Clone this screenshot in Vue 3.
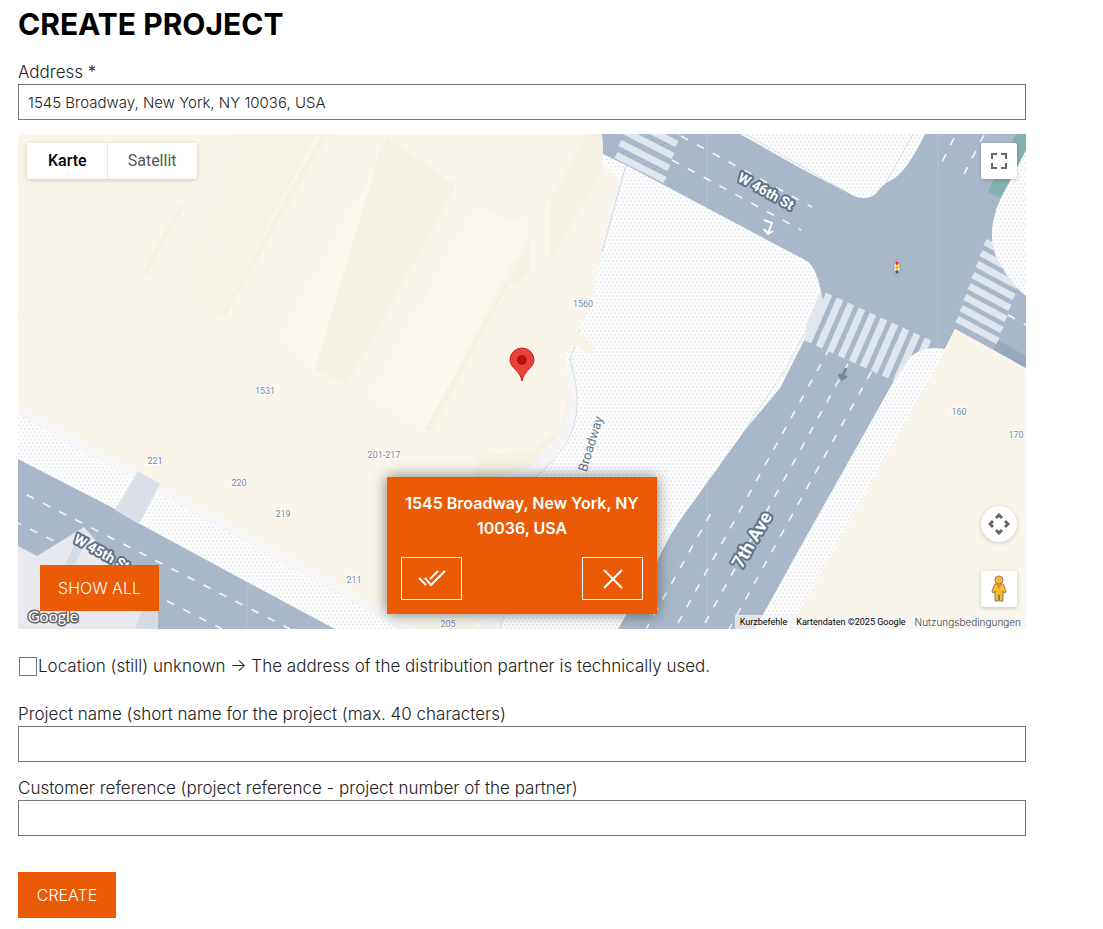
<script setup>
import { ref } from 'vue'

const address = ref('1545 Broadway, New York, NY 10036, USA')
const unknownLocation = ref(false)
const projectName = ref('')
const customerReference = ref('')
const mapType = ref('map')
const infoOpen = ref(true)

const stripes = (count, x1, y1, x2, y2, dx, dy) =>
  Array.from({ length: count }, (_, i) => ({
    x1: x1 + i * dx,
    y1: y1 + i * dy,
    x2: x2 + i * dx,
    y2: y2 + i * dy,
  }))

const crosswalks = [
  ...stripes(5, 616, 155, 665, 180, 4, -12),
  ...stripes(10, 829, 294, 808, 342, 11, 5),
  ...stripes(8, 957, 319, 998, 341, 4, -11),
]

const lanes = [
  'M645 631L711 513',
  'M678 623L828 351',
  'M705 623L850 360',
  'M728 631L874 367',
  'M954 138L940 166',
  'M984 135L964 174',
  'M681 136L812 207',
  'M672 160L801 230',
  'M1008 315L1026 325',
  'M27 495L290 629',
  'M14 521L54 541',
  'M167 601L222 629',
]

const numbers = [
  ['1560', 583, 307],
  ['1531', 265, 394],
  ['221', 155, 464],
  ['220', 239, 486],
  ['219', 283, 517],
  ['201-217', 384, 458],
  ['211', 354, 583],
  ['205', 448, 627],
  ['160', 959, 415],
  ['170', 1016, 438],
]
</script>

<template>
  <main class="page">
    <h1>CREATE PROJECT</h1>
    <form @submit.prevent>
      <div class="field">
        <label for="address">Address *</label>
        <input id="address" v-model="address" type="text" required />
      </div>

      <section class="map" aria-label="Map">
        <svg class="canvas" viewBox="18 134 1008 495" preserveAspectRatio="xMidYMid slice">
          <defs>
            <pattern id="dots" width="8" height="7" patternUnits="userSpaceOnUse">
              <rect width="8" height="7" fill="#fefefe" />
              <path
                d="M0 1h2v2H0zM4 1h2v2H4zM2 4.5h2v2H2zM6 4.5h2v2H6z"
                fill="#eceef1"
              />
            </pattern>
            <linearGradient id="roof" x1="0" x2="1" y1="0" y2="0.4">
              <stop offset="0" stop-color="#fbf7ed" />
              <stop offset="0.8" stop-color="#f5f1e5" />
            </linearGradient>
          </defs>
          <rect x="18" y="134" width="1008" height="495" fill="url(#dots)" />

          <!-- pavement edges -->
          <path d="M626 165L602 252M745 134L850 194M913 134L885 184M823 300L784 372L748 425" class="edge" />

          <!-- streets -->
          <path
            class="road"
            d="M602 134H740L800 168L850 194Q864 202 876 194Q882 184 892 180Q908 170 925 134H1026V150L1001 198Q982 240 1003 268Q1011 284 1026 296V368L955 329L945 349Q920 345 908 360L893 383L800 548L755 629H618L657 562Q664 545 678 523L745 430L780 388L789 370L823 304Q818 266 805 260L626 165L603 154Z"
          />
          <path class="road" d="M18 459L115 509L140 524L290 605L335 629H165L18 629Z" />
          <path d="M1016 134H1026V150L1001 198L988 192Z" fill="#82b1ae" />
          <path d="M998 340L1026 356V368L994 350Z" fill="#98a9bb" />
          <path d="M823 304L820 292L806 326L805 343Z" fill="#dfe6ee" />

          <line v-for="(s, i) in crosswalks" :key="i" v-bind="s" class="stripe" />
          <path d="M1030 144L1001 198Q982 240 1003 268Q1011 284 1030 299Z" fill="url(#dots)" />
          <path d="M955 329L945 349Q920 345 908 360L893 383L800 548L755 629H800L930 395Z" fill="url(#dots)" />
          <path v-for="d in lanes" :key="d" :d="d" class="lane" />

          <!-- right block -->
          <path d="M955 329L1026 369V629H789L932 376Z" fill="#f9f5ea" />

          <!-- south-west block -->
          <path d="M18 546L37 556L84 527L158 612V629H18Z" fill="#e8e9ef" />
          <path d="M82 529L58 580L67 580L84 545ZM149 590L135 629H158V612Z" fill="#d6dae4" />
          <path d="M18 404L440 629H400L18 415Z" fill="#f6f6f7" />
          <path d="M138 471L161 482L139 524L115 510Z" fill="#dbdfe8" />

          <!-- main block -->
          <path d="M603 166L620 180L604 245L592 300L576 340L570 352Q590 420 560 450Q546 470 530 482L500 629H480L490 480L560 420Z" fill="#f5f5f7" />
          <path d="M626 165L602 252M580 330L570 360Q586 410 566 444Q555 461 535 478M508 600L500 629" class="edge" />
          <path
            d="M18 134H602L603 166L610 169L620 180L610 201L593 290L578 333L596 346L590 355L572 344L566 354L568 410L560 432L531 467L495 478L478 629H420L18 404Z"
            fill="#f9f5ea"
          />
          <path d="M238 134H316L220 315L141 272L180 205Q225 160 238 134Z" fill="url(#roof)" />
          <path d="M180 205L140 274L147 275L184 207ZM322 134L221 313L225 317L329 134Z" fill="#f4f0e4" />
          <path d="M387 137L456 186L347 385L315 369L380 152Z" fill="#f4f0e4" />
          <path d="M380 152L363 190L277 342L294 350L315 369Z" fill="#fbf7ed" />
          <path d="M476 205L530 224L425 431L369 398Z" fill="#fbf7ec" />
          <path d="M530 238V268L518 286L510 282L432 431L425 429L500 292Z" fill="#f4f0e4" />
          <path d="M587 134L551 199V260L603 170L602 134ZM571 384L561 428L531 450L474 457L480 462L473 478L495 478L531 467L560 432L568 410Z" fill="#f4f0e4" />
          <path d="M456 186L506 219L545 202M18 208L70 238M18 319L130 380M255 410L345 463" class="roofline" />
          <path d="M247 134V629M477 134V480M707 134V629M938 134V615" class="tile" />

          <!-- signs on the roadway -->
          <path d="M764 220L772 223L768 233M764 229L768 234L773 231" class="turn" />
          <path d="M846 368L842 377M839 374L842 379L847 376" class="small-arrow" />
          <rect x="894" y="260" width="6" height="15" rx="2" fill="#fff" stroke="#8997a8" />
          <circle cx="897" cy="263" r="2" fill="#ea4335" />
          <circle cx="897" cy="267.500" r="2" fill="#fbbc04" />
          <circle cx="897" cy="272" r="2" fill="#526580" />

          <text v-for="[label, x, y] in numbers" :key="label" :x="x" :y="y" class="number">{{ label }}</text>
          <text x="766" y="196" transform="rotate(29 766 191)" class="street">W 46th St</text>
          <text x="102" y="557" transform="rotate(29 101 552)" class="street">W 45th St</text>
          <text x="752" y="546" transform="rotate(-60 752 540)" class="street avenue">7th Ave</text>
          <text x="591" y="448" transform="rotate(-73 591 444)" class="broadway">Broadway</text>

          <!-- location pin -->
          <path
            d="M522 381C520 370 510 368 510 360A12 12 0 0 1 534 360C534 368 524 370 522 381Z"
            fill="#ea4335"
            stroke="#c5221f"
          />
          <circle cx="522" cy="360" r="5" fill="#b31412" />
        </svg>

        <div class="map-types">
          <button type="button" :class="{ active: mapType === 'map' }" @click="mapType = 'map'">Karte</button>
          <button type="button" :class="{ active: mapType === 'satellite' }" @click="mapType = 'satellite'">Satellit</button>
        </div>
        <button type="button" class="control fullscreen" aria-label="Fullscreen">
          <svg width="18" height="18" viewBox="0 0 18 18"><path d="M2 7V2H7M11 2H16V7M16 11V16H11M7 16H2V11" /></svg>
        </button>
        <button type="button" class="control camera" aria-label="Camera controls">
          <svg width="22" height="22" viewBox="0 0 22 22"><path d="M8 5L11 2L14 5M17 8L20 11L17 14M14 17L11 20L8 17M5 14L2 11L5 8" /></svg>
        </button>
        <button type="button" class="control pegman" aria-label="Street View">
          <svg width="18" height="28" viewBox="0 0 18 28">
            <path d="M5 9L13 9Q15 12 16 17L14 18L13 16V26H9.500V20H8.500V26H5V16L4 18L2 17Q3 12 5 9Z" fill="#fbbc2a" stroke="#8c7b64" />
            <circle cx="9" cy="5" r="4" fill="#fbbc2a" stroke="#8c7b64" />
            <path d="M6 9H12L9 14Z" fill="#e8893b" />
          </svg>
        </button>

        <div v-if="infoOpen" class="info">
          <p>1545 Broadway, New York, NY 10036, USA</p>
          <div class="info-actions">
            <button type="button" aria-label="Accept address">
              <svg width="28" height="18" viewBox="0 0 28 18"><path d="M1 8L8 15M7 8L13 15L27 1M12 9L20 1" /></svg>
            </button>
            <button type="button" aria-label="Close" @click="infoOpen = false">
              <svg width="20" height="20" viewBox="0 0 20 20"><path d="M1 1L19 19M19 1L1 19" /></svg>
            </button>
          </div>
        </div>

        <a class="logo" href="#" aria-label="Google Maps">
          <svg width="56" height="24" viewBox="0 0 56 24"><text x="1" y="17">Google</text></svg>
        </a>
        <button type="button" class="primary show-all">SHOW ALL</button>
        <div class="credits">
          <button type="button">Kurzbefehle</button>
          <span>Kartendaten ©2025 Google</span>
          <a href="#">Nutzungsbedingungen</a>
        </div>
      </section>

      <div class="check">
        <input id="unknown" v-model="unknownLocation" type="checkbox" />
        <label for="unknown">Location (still) unknown → The address of the distribution partner is technically used.</label>
      </div>

      <div class="field">
        <label for="project-name">Project name (short name for the project (max. 40 characters)</label>
        <input id="project-name" v-model="projectName" type="text" maxlength="40" />
      </div>
      <div class="field">
        <label for="customer-reference">Customer reference (project reference - project number of the partner)</label>
        <input id="customer-reference" v-model="customerReference" type="text" />
      </div>
      <button type="submit" class="primary create">CREATE</button>
    </form>
  </main>
</template>

<style>
body {
  background: #fff;
}
</style>

<style scoped>
* {
  box-sizing: border-box;
}
.page {
  padding: 4px 77px 11px 18px;
  color: #222;
  font: 300 17px/24px Inter, "Liberation Sans", sans-serif;
}
h1 {
  margin: 0 0 16px;
  color: #000;
  font-size: 30px;
  font-weight: 700;
  line-height: 40px;
}
button,
input {
  font: inherit;
  color: inherit;
}
button {
  padding: 0;
  border: 0;
  cursor: pointer;
}
.field {
  margin-bottom: 14px;
}
.field label {
  display: block;
  line-height: 24px;
}
.field input {
  display: block;
  width: 100%;
  height: 36px;
  padding: 0 9px;
  border: 1px solid #767676;
  border-radius: 0;
  background: #fff;
  font-size: 15px;
}
.map {
  position: relative;
  height: 495px;
  overflow: hidden;
  font-family: Roboto, sans-serif;
}
.canvas {
  display: block;
  width: 100%;
  height: 100%;
}
.road {
  fill: #a9b8c9;
}
.edge {
  fill: none;
  stroke: #d9dde5;
}
.stripe {
  stroke: #dfe6ee;
  stroke-width: 7;
}
.lane {
  stroke: #f5f8fa;
  stroke-width: 1.5;
  stroke-dasharray: 8 10;
}
.roofline {
  fill: none;
  stroke: #f5f1e6;
}
.tile {
  stroke: #fff;
  stroke-opacity: 0.12;
}
.turn {
  fill: none;
  stroke: #fff;
  stroke-width: 2;
}
.small-arrow {
  fill: none;
  stroke: #76879a;
  stroke-width: 3;
}
.number {
  fill: #7489a0;
  stroke: #fff;
  stroke-width: 2;
  paint-order: stroke;
  font-size: 9px;
  font-weight: 400;
  text-anchor: middle;
}
.street {
  fill: #fff;
  stroke: #5f7288;
  stroke-width: 4;
  stroke-linejoin: round;
  paint-order: stroke;
  font-size: 14px;
  font-weight: 700;
  text-anchor: middle;
}
.avenue {
  font-size: 18px;
}
.broadway {
  fill: #62768c;
  stroke: #fff;
  stroke-width: 2;
  paint-order: stroke;
  font-size: 13px;
  font-weight: 400;
  text-anchor: middle;
}
.map-types {
  position: absolute;
  top: 9px;
  left: 9px;
  display: flex;
  border-radius: 2px;
  box-shadow: 0 1px 4px rgba(0, 0, 0, 0.2);
}
.map-types button {
  height: 36px;
  padding: 0 20px 0 21px;
  background: #fff;
  color: #565656;
  font-size: 16px;
  font-weight: 400;
  border-radius: 0 2px 2px 0;
}
.map-types button + button {
  border-left: 1px solid #e6e6e6;
  padding: 0 20px;
}
.map-types .active {
  color: #000;
  font-weight: 500;
}
.control {
  position: absolute;
  right: 9px;
  display: flex;
  align-items: center;
  justify-content: center;
  width: 36px;
  height: 36px;
  border-radius: 2px;
  background: #fff;
  box-shadow: 0 1px 4px rgba(0, 0, 0, 0.2);
}
.fullscreen path,
.camera path {
  fill: none;
  stroke: #666;
  stroke-width: 2;
}
.camera path {
  stroke-width: 3;
}
.fullscreen {
  top: 9px;
}
.camera {
  bottom: 87px;
  border-radius: 50%;
}
.pegman {
  bottom: 22px;
}
.info {
  position: absolute;
  top: 343px;
  left: 50%;
  width: 270px;
  padding: 14px;
  background: #eb5b05;
  box-shadow: 0 0 14px rgba(0, 0, 0, 0.5);
  color: #fff;
  transform: translateX(-50%);
}
.info p {
  margin: 0 0 16px;
  font: 600 16px/25px Inter, "Liberation Sans", sans-serif;
  text-align: center;
}
.info-actions {
  display: flex;
  justify-content: space-between;
}
.info-actions button {
  display: flex;
  align-items: center;
  justify-content: center;
  width: 61px;
  height: 43px;
  border: 1px solid #fff;
  background: transparent;
}
.info-actions path {
  fill: none;
  stroke: #fff;
  stroke-width: 2;
}
.primary {
  height: 46px;
  background: #eb5b05;
  color: #fff;
  font: 300 16px/46px Inter, "Liberation Sans", sans-serif;
}
.show-all {
  position: absolute;
  bottom: 18px;
  left: 22px;
  width: 119px;
}
.logo {
  position: absolute;
  bottom: 0;
  left: 9px;
  height: 24px;
}
.logo text {
  fill: #fff;
  stroke: #666;
  stroke-width: 3;
  stroke-linejoin: round;
  paint-order: stroke;
  font: 400 16px Lato, sans-serif;
}
.credits {
  position: absolute;
  right: 0;
  bottom: 0;
  display: flex;
  gap: 9px;
  padding: 0 5px;
  background: rgba(245, 245, 245, 0.75);
  color: #000;
  font-size: 9px;
  font-weight: 400;
  line-height: 14px;
}
.credits button {
  background: transparent;
  line-height: 14px;
}
.credits a {
  color: #444;
  font-family: Inter, sans-serif;
  font-size: 10px;
  font-weight: 300;
  text-decoration: none;
}
.check {
  display: flex;
  align-items: center;
  margin: 25px 0 24px;
  padding-left: 1px;
}
.check input {
  flex: none;
  width: 18px;
  height: 19px;
  margin: 0 1px 0 0;
  border: 1px solid #767676;
  background: #fff;
  appearance: none;
}
.check input:checked {
  background: #eb5b05;
}
.create {
  display: block;
  width: 98px;
  margin-top: 36px;
}
</style>
